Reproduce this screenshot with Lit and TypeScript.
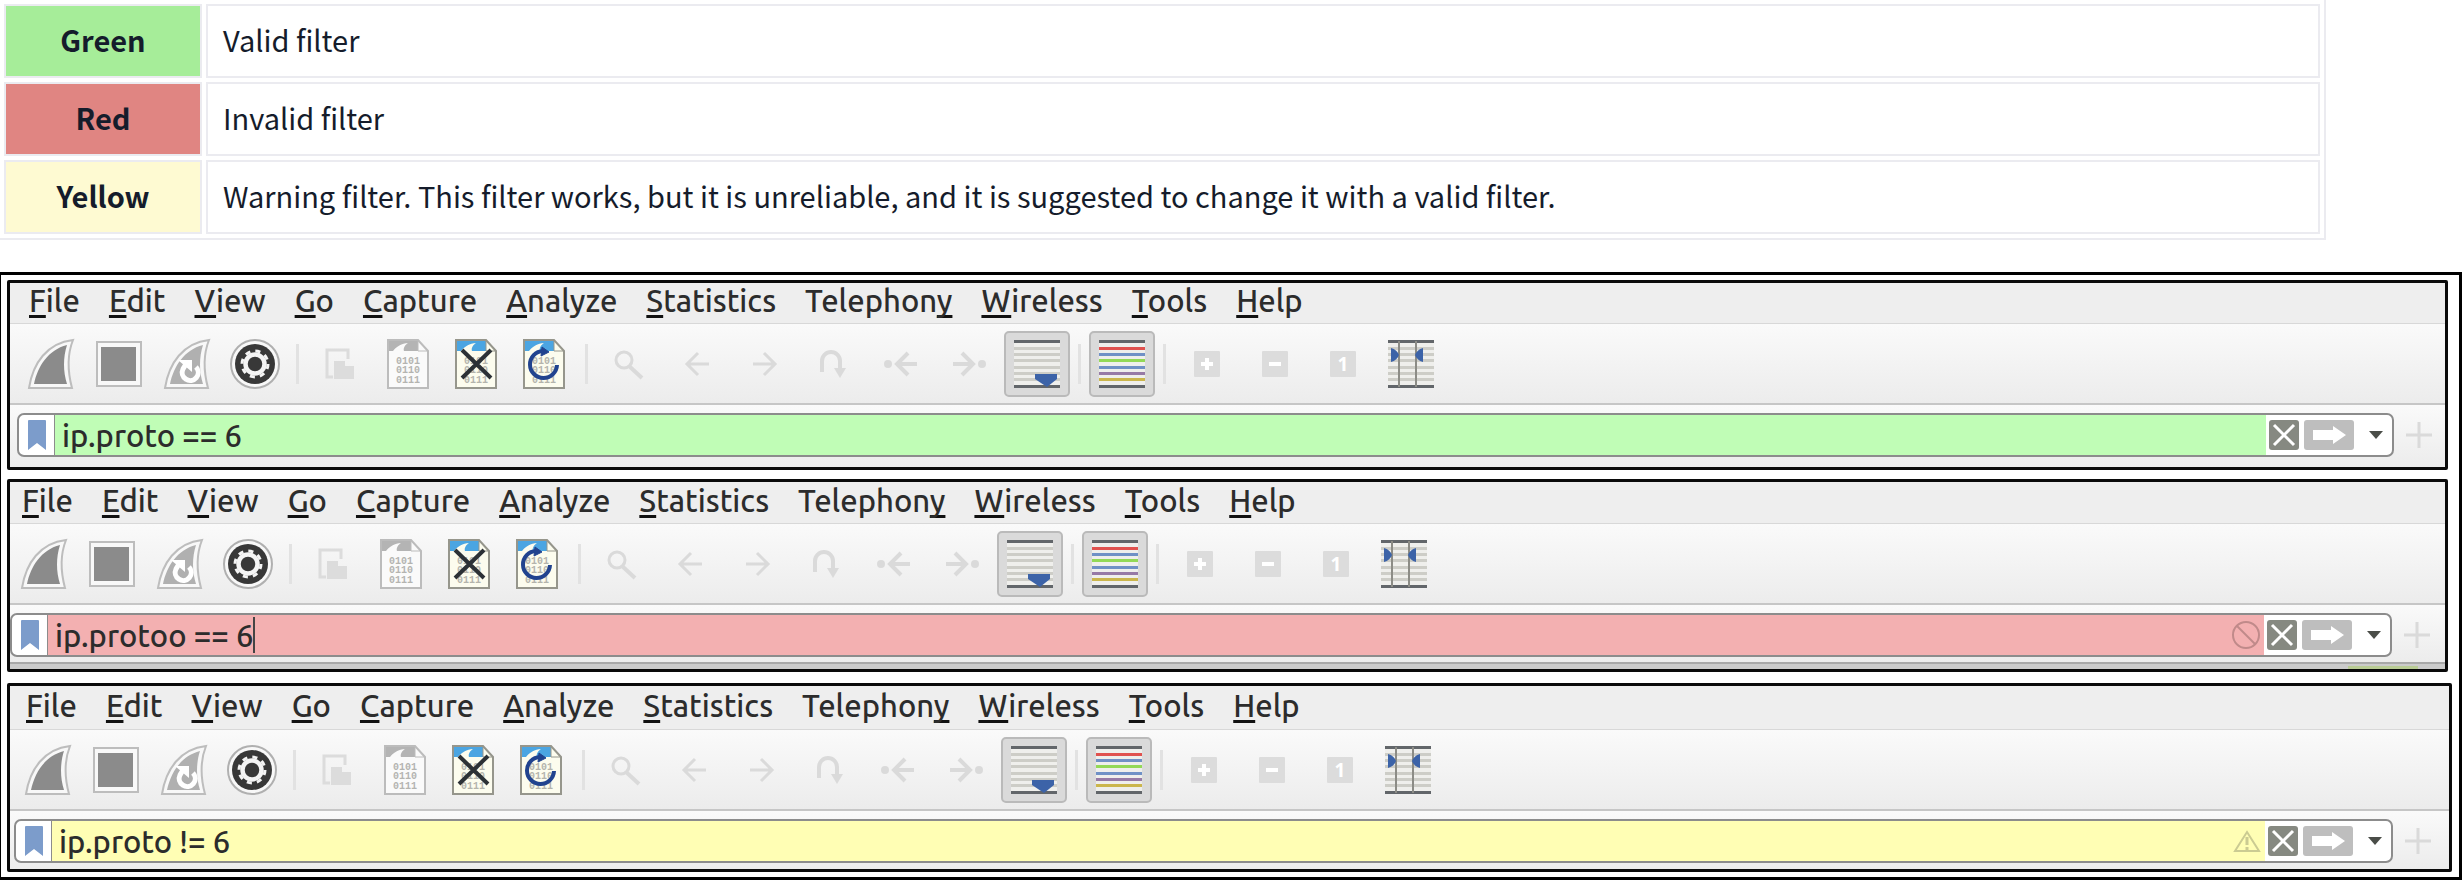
import { LitElement, html, css, svg, nothing, TemplateResult } from "lit";
import { customElement, property } from "lit/decorators.js";
import { classMap } from "lit/directives/class-map.js";

type Status = "valid" | "invalid" | "warning";

const LEGEND: { name: string; status: Status; text: string }[] = [
  { name: "Green", status: "valid", text: "Valid filter" },
  { name: "Red", status: "invalid", text: "Invalid filter" },
  {
    name: "Yellow",
    status: "warning",
    text: "Warning filter. This filter works, but it is unreliable, and it is suggested to change it with a valid filter.",
  },
];

// Menu labels; the number is the index of the mnemonic letter.
const MENU: [string, number][] = [
  ["File", 0],
  ["Edit", 0],
  ["View", 0],
  ["Go", 0],
  ["Capture", 0],
  ["Analyze", 0],
  ["Statistics", 0],
  ["Telephony", 8],
  ["Wireless", 0],
  ["Tools", 0],
  ["Help", 0],
];

const icon = (w: number, h: number, body: TemplateResult) =>
  html`<svg width=${w} height=${h} viewBox="0 0 ${w} ${h}" aria-hidden="true">${body}</svg>`;

const finOutline = svg`<path d="M1 49C5 24 19 4 45 1C39 16 40 34 44 49Z" fill="#f8f8f8" stroke="#bdbdbd" stroke-width="2"/>`;

const fin = icon(46, 50, svg`${finOutline}
  <path d="M6 45C10 27 20 11 39 6C35 18 35 33 39 45Z" fill="#8b8b8b"/>`);

const stop = icon(46, 46, svg`
  <rect x="1" y="1" width="44" height="44" fill="#f8f8f8" stroke="#bdbdbd" stroke-width="2"/>
  <rect x="5" y="6" width="35" height="34" fill="#8b8b8b"/>`);

const restart = icon(46, 50, svg`${finOutline}
  <path d="M6 45C10 27 20 11 39 6C35 18 35 33 39 45Z" fill="#b0b0b0"/>
  <path d="M32 28A8 8 0 1 1 19 30L22 25" fill="none" stroke="#fff" stroke-width="5"/>
  <path d="M14 21H28V33Z" fill="#fff"/>`);

const options = icon(50, 50, svg`
  <circle cx="25" cy="25" r="24" fill="#f8f8f8" stroke="#b0b0b0" stroke-width="2"/>
  <circle cx="25" cy="25" r="20" fill="#383838"/>
  <circle cx="25" cy="25" r="13" fill="none" stroke="#f4f4f4" stroke-width="3" stroke-dasharray="5.1 5.1"/>
  <circle cx="25" cy="25" r="9.500" fill="none" stroke="#f4f4f4" stroke-width="4.500"/>`);

const copy = icon(30, 32, svg`
  <path d="M8 29H2V2H23V11" fill="none" stroke="#dcdcdc" stroke-width="3"/>
  <path d="M9 13H20V18H29V31H9Z" fill="#dcdcdc"/>`);

const bits = svg`<g font-family="Liberation Mono" font-size="10" font-weight="700" fill="#8f8f8a" opacity="0.65">
  <text x="9" y="25">0101</text><text x="9" y="34">0110</text><text x="9" y="44">0111</text></g>`;

const sheet = (head: string, paper: string, edge: string, over: unknown = nothing) =>
  icon(42, 50, svg`
    <path d="M1 1H31L41 12V49H1Z" fill=${paper}/>
    <path d="M2 2H31V8L35 12H17C16 9 18 6 21 4C15 4 9 8 6 12H2Z" fill=${head}/>
    ${bits}
    <path d="M31 1V12H41Z" fill=${paper} stroke=${edge} stroke-width="1"/>
    <path d="M1 1H31L41 12V49H1Z" fill="none" stroke=${edge} stroke-width="2"/>
    ${over}`);

const save = sheet("#b4b4b4", "#fafafa", "#bcbcbc");
const closeFile = sheet("#4ba5e2", "#fcfcee", "#96968c",
  svg`<path d="M7 11L36 39M36 11L7 39" stroke="#2c3136" stroke-width="4"/>`);
const reload = sheet("#4ba5e2", "#fcfcee", "#96968c",
  svg`<path d="M34 26A13.500 13.500 0 1 1 20 12" fill="none" stroke="#21438f" stroke-width="4"/>
      <path d="M19 8L26 13L18 17Z" fill="#21438f" stroke="#21438f"/>`);

const faint = "#dadada";
const search = icon(30, 30, svg`<circle cx="10" cy="11" r="8" fill="none" stroke=${faint} stroke-width="3"/>
  <path d="M15 17L28 29" stroke=${faint} stroke-width="4"/>`);
const back = icon(26, 26, svg`<path d="M25 13H3M14 2L3 13L14 24" fill="none" stroke=${faint} stroke-width="3"/>`);
const forward = icon(26, 26, svg`<path d="M1 13H23M12 2L23 13L12 24" fill="none" stroke=${faint} stroke-width="3"/>`);
const goTo = icon(26, 28, svg`<path d="M2 22V11A9 9 0 0 1 20 11V20" fill="none" stroke=${faint} stroke-width="4"/>
  <path d="M14 18H26L20 28Z" fill=${faint}/>`);
const first = icon(34, 26, svg`<circle cx="4" cy="13" r="4" fill=${faint}/>
  <path d="M33 13H13M24 2L13 13L24 24" fill="none" stroke=${faint} stroke-width="4"/>`);
const last = icon(34, 26, svg`<circle cx="30" cy="13" r="4" fill=${faint}/>
  <path d="M1 13H21M10 2L21 13L10 24" fill="none" stroke=${faint} stroke-width="4"/>`);

const lines = (colors: string[]) =>
  svg`<rect width="46" height="48" fill="#efefec"/>
    ${colors.map((c, i) => svg`<rect y=${[0, 7, 13, 19, 26, 32, 38, 45][i]} width="46" height="3" fill=${c}/>`)}`;
const DARK = "#62666a";
const PALE = "#cdcdc7";
const plainLines = [DARK, PALE, PALE, PALE, PALE, PALE, PALE, DARK];

const autoScroll = icon(46, 48, svg`${lines(plainLines)}
  <path d="M21 34H43V39L33 47L21 39Z" fill="#3c63a8"/>`);
const colorize = icon(46, 48, lines([DARK, "#e0524f", "#7091c6", "#93d957", "#7091c6", "#977aa6", "#cbb64c", DARK]));
const resize = icon(46, 48, svg`${lines(plainLines)}
  <path d="M11 1V47M28 1V47" stroke="#8c8c86" stroke-width="2"/>
  <path d="M3 8C7 9 10 12 11 15C10 18 7 21 3 22ZM35 8C31 9 28 12 27 15C28 18 31 21 35 22Z" fill="#3c63a8"/>`);

const square = svg`<rect width="26" height="26" rx="1" fill="#dcdcdc"/>`;
const zoomIn = icon(26, 26, svg`${square}<path d="M7 13H19M13 7V19" stroke="#fff" stroke-width="4"/>`);
const zoomOut = icon(26, 26, svg`${square}<path d="M7 13H19" stroke="#fff" stroke-width="4"/>`);
const zoomOne = icon(26, 26, svg`${square}<text x="13" y="20" text-anchor="middle" font-family="Open Sans"
  font-size="19" font-weight="700" fill="#fff">1</text>`);

type Tool = { label: string; icon: TemplateResult; pressed?: boolean };
const TOOL_GROUPS: Tool[][] = [
  [
    { label: "Start capture", icon: fin },
    { label: "Stop capture", icon: stop },
    { label: "Restart capture", icon: restart },
    { label: "Capture options", icon: options },
  ],
  [
    { label: "Open", icon: copy },
    { label: "Save", icon: save },
    { label: "Close", icon: closeFile },
    { label: "Reload", icon: reload },
  ],
  [
    { label: "Find packet", icon: search },
    { label: "Previous packet", icon: back },
    { label: "Next packet", icon: forward },
    { label: "Go to packet", icon: goTo },
    { label: "First packet", icon: first },
    { label: "Last packet", icon: last },
    { label: "Auto scroll", icon: autoScroll, pressed: true },
  ],
  [{ label: "Colorize", icon: colorize, pressed: true }],
  [
    { label: "Zoom in", icon: zoomIn },
    { label: "Zoom out", icon: zoomOut },
    { label: "Normal size", icon: zoomOne },
    { label: "Resize columns", icon: resize },
  ],
];

const bookmark = icon(18, 30, svg`<path d="M0 1Q0 0 1 0H17Q18 0 18 1V30L9 23L0 30Z" fill="#7c9ccb"/>`);
const clear = icon(30, 30, svg`<rect width="30" height="30" rx="3" fill="#868981"/>
  <path d="M5 5L25 25M25 5L5 25" stroke="#fff" stroke-width="3"/>`);
const apply = icon(50, 30, svg`<rect width="50" height="30" rx="3" fill="#bebebe"/>
  <path d="M9 10H29V6L42 15L29 24V20H9Z" fill="#fff"/>`);
const caretDown = icon(14, 8, svg`<path d="M0 0H14L7 8Z" fill="#4a4d48"/>`);
const plus = icon(26, 26, svg`<path d="M0 13H26M13 0V26" stroke="#dadada" stroke-width="3"/>`);
const forbidden = icon(28, 28, svg`<g fill="none" stroke="#c08a8a" stroke-width="2">
  <circle cx="14" cy="14" r="13"/><path d="M5 5L23 23"/></g>`);
const alert = icon(28, 22, svg`<path d="M14 2L26 21H2Z" fill="none" stroke="#cbcb92" stroke-width="2"/>
  <path d="M14 7V15M14 17V20" stroke="#cbcb92" stroke-width="3"/>`);

@customElement("filter-window")
export class FilterWindow extends LitElement {
  @property() filter = "";
  @property() status: Status = "valid";
  @property({ type: Boolean }) editing = false;

  static styles = css`
    :host {
      display: block;
      box-sizing: border-box;
      border: 3px solid #0a0a0a;
      border-radius: 2px;
      overflow: hidden;
      background: #efefef;
      color: #2c2c2c;
      font-family: Ubuntu, "Noto Sans", sans-serif;
      font-size: 31px;
      font-weight: 500;
      line-height: 36px;
    }
    svg {
      display: block;
      overflow: visible;
    }
    button {
      padding: 0;
      border: 0;
      background: none;
      color: inherit;
      font: inherit;
    }
    .menu {
      display: flex;
      gap: 29px;
      height: var(--menu-height);
      box-sizing: border-box;
      padding: 0 0 4px calc(var(--inset) + 12px);
      align-items: center;
      background: #eee;
    }
    .mnemonic {
      text-decoration: underline 3px #111;
      text-underline-offset: 3px;
      text-decoration-skip-ink: none;
    }
    .tools {
      display: flex;
      align-items: center;
      height: 82px;
      box-sizing: border-box;
      padding-left: var(--inset);
      border-top: 1px solid #d8d8d8;
      border-bottom: 2px solid #c6c6c6;
      background: linear-gradient(#fafafa, #ececec);
    }
    .group {
      display: flex;
    }
    .group + .group::before {
      content: "";
      align-self: center;
      width: 3px;
      height: 40px;
      margin: 0 7px;
      background: #e2e2e2;
    }
    .tool {
      display: grid;
      place-items: center;
      box-sizing: border-box;
      width: 66px;
      height: 66px;
      margin: 0 1px;
    }
    .pressed {
      border: 2px solid #bababa;
      border-radius: 5px;
      background: #dadada;
    }
    .filter-row {
      display: flex;
      padding: 8px var(--inset-end) var(--inset-bottom) var(--inset);
      background: linear-gradient(#fafafa, #ececec);
    }
    .field {
      flex: 1;
      display: flex;
      align-items: stretch;
      height: 44px;
      box-sizing: border-box;
      border: 2px solid #8c8c8c;
      border-radius: 7px;
      background: #fff;
      overflow: hidden;
    }
    .bookmark {
      display: grid;
      place-items: center;
      width: 36px;
      border-right: 1px solid #8c8c8c;
    }
    .entry {
      flex: 1;
      display: flex;
      align-items: center;
      padding: 0 4px 0 7px;
    }
    .entry.valid {
      background: #c0fdb6;
    }
    .entry.invalid {
      background: #f3b0b1;
    }
    .entry.warning {
      background: #fffeb4;
    }
    input {
      flex: 1;
      min-width: 0;
      height: 40px;
      padding: 0;
      border: 0;
      outline: 0;
      background: none;
      color: #2c2c2c;
      font: inherit;
    }
    .editing input {
      flex: none;
      field-sizing: content;
    }
    .cursor {
      width: 2px;
      height: 36px;
      background: #444;
    }
    .mark {
      margin-left: auto;
    }
    .actions {
      display: flex;
      align-items: center;
      gap: 5px;
      padding-left: 3px;
    }
    .history {
      display: grid;
      place-items: center;
      width: 33px;
      height: 40px;
    }
    .history > * {
      grid-area: 1 / 1;
    }
    .history svg {
      pointer-events: none;
    }
    select {
      width: 33px;
      height: 40px;
      padding: 0;
      border: 0;
      appearance: none;
      background: none;
    }
    .add {
      display: grid;
      place-items: center;
      width: 50px;
      margin-right: -50px;
    }
    .header-strip {
      display: flex;
      height: 7px;
      box-sizing: border-box;
      padding-right: 27px;
      border-top: 2px solid #a8a8a8;
      background: #cbcbcb;
    }
    .chip {
      width: 70px;
      height: 3px;
      margin: 2px 0 0 auto;
      background: #b9cc94;
    }
  `;

  private label([text, at]: [string, number]) {
    return html`<button role="menuitem">${text.slice(0, at)}<span class="mnemonic">${text[at]}</span>${text.slice(at + 1)}</button>`;
  }

  render() {
    const mark = this.status === "invalid" ? forbidden : this.status === "warning" ? alert : nothing;
    return html`
      <nav class="menu" role="menubar">${MENU.map((m) => this.label(m))}</nav>
      <div class="tools" role="toolbar">
        ${TOOL_GROUPS.map(
          (group) => html`<div class="group">
            ${group.map(
              (t) => html`<button class=${classMap({ tool: true, pressed: !!t.pressed })} aria-label=${t.label}>${t.icon}</button>`
            )}
          </div>`
        )}
      </div>
      <div class="filter-row">
        <div class="field">
          <button class="bookmark" aria-label="Bookmarks">${bookmark}</button>
          <div class=${classMap({ entry: true, [this.status]: true, editing: this.editing })}>
            <input type="text" aria-label="Display filter" spellcheck="false" .value=${this.filter} />
            ${this.editing ? html`<span class="cursor"></span>` : nothing}
            <span class="mark">${mark}</span>
          </div>
          <div class="actions">
            <button aria-label="Clear">${clear}</button>
            <button aria-label="Apply">${apply}</button>
            <div class="history">
              <select aria-label="Recent filters"></select>
              ${caretDown}
            </div>
          </div>
        </div>
        <button class="add" aria-label="Add filter button">${plus}</button>
      </div>
      ${this.editing ? html`<div class="header-strip"><span class="chip"></span></div>` : nothing}
    `;
  }
}

@customElement("app-root")
export class AppRoot extends LitElement {
  static styles = css`
    :host {
      display: block;
      background: #fff;
    }
    .legend {
      width: calc(100% - 136px);
      border: solid #ebebf0;
      border-width: 0 2px 2px 0;
      border-collapse: separate;
      border-spacing: 4px;
      color: #151c2b;
      font-family: "Source Sans Pro", "Noto Sans CJK SC", sans-serif;
      font-size: 29px;
      line-height: 42px;
      text-align: left;
    }
    .legend th,
    .legend td {
      box-sizing: border-box;
      height: 74px;
      padding: 0 15px 4px;
      border: 2px solid #ebebf0;
    }
    .legend th {
      width: 198px;
      text-align: center;
    }
    .valid {
      background: #a6ed99;
    }
    .invalid {
      background: #e08582;
    }
    .warning {
      background: #fefad2;
    }
    .windows {
      display: flex;
      flex-direction: column;
      margin-top: 32px;
      padding: 5px 11px 5px 6px;
      border: solid #000;
      border-width: 3px 3px 3px 1px;
    }
    .first {
      --inset: 7px;
      --inset-end: 51px;
      --inset-bottom: 10px;
      --menu-height: 40px;
      margin-bottom: 9px;
    }
    .second {
      --inset: 0px;
      --inset-end: 53px;
      --inset-bottom: 5px;
      --menu-height: 41px;
      margin-bottom: 11px;
    }
    .third {
      --inset: 4px;
      --inset-end: 56px;
      --inset-bottom: 6px;
      --menu-height: 43px;
      margin-right: -4px;
    }
  `;

  render() {
    return html`
      <table class="legend">
        <tbody>
          ${LEGEND.map(
            (row) => html`<tr>
              <th scope="row" class=${row.status}>${row.name}</th>
              <td>${row.text}</td>
            </tr>`
          )}
        </tbody>
      </table>
      <main class="windows">
        <filter-window class="first" filter="ip.proto == 6" status="valid"></filter-window>
        <filter-window class="second" filter="ip.protoo == 6" status="invalid" editing></filter-window>
        <filter-window class="third" filter="ip.proto != 6" status="warning"></filter-window>
      </main>
    `;
  }
}
